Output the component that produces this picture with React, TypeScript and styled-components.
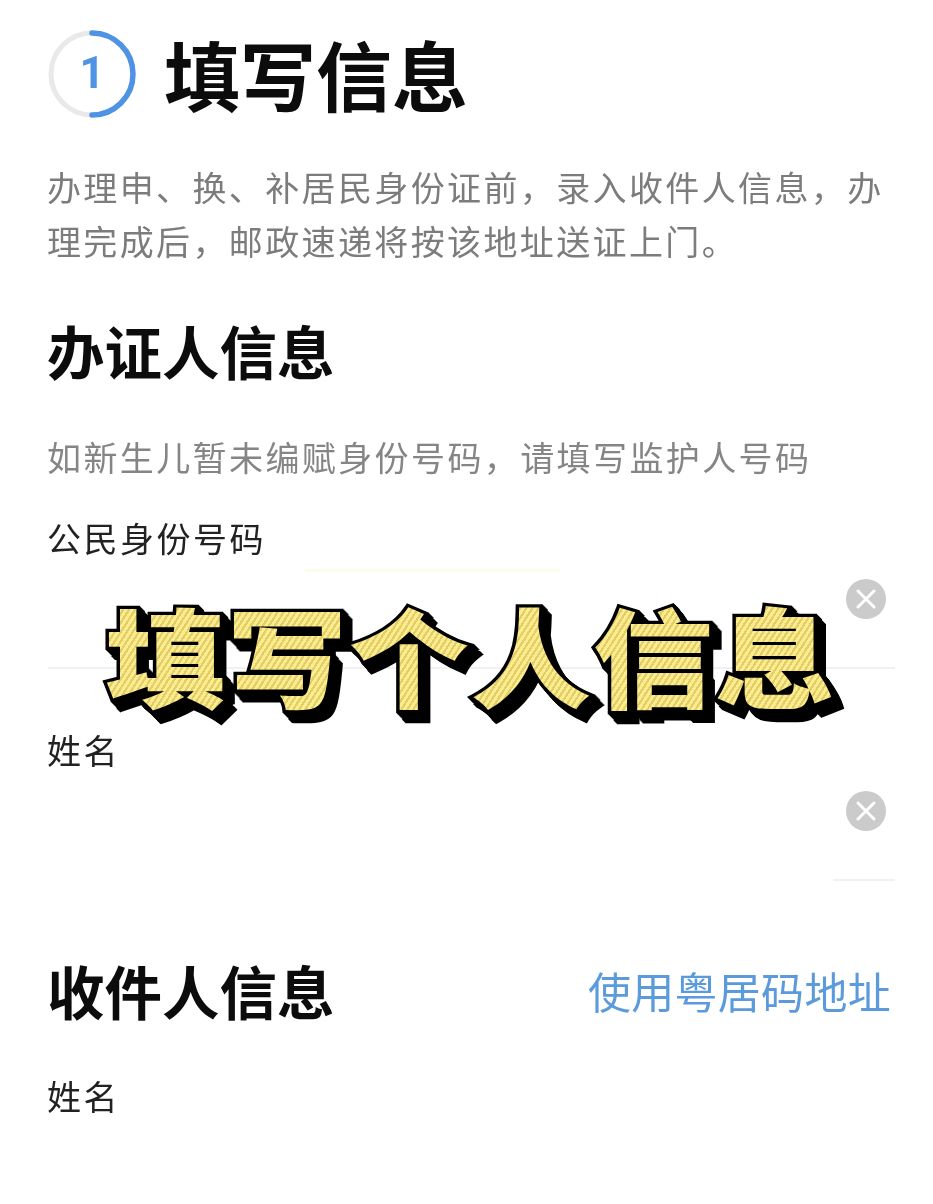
import React from "react";
import styled, { createGlobalStyle } from "styled-components";

const Global = createGlobalStyle`
  html, body { margin: 0; padding: 0; background: #fff; }
  body { font-family: "Noto Sans CJK SC", "Noto Sans", sans-serif; }
`;

const Page = styled.main`
  position: relative;
  width: 933px;
  height: 1204px;
  overflow: hidden;
  box-sizing: border-box;
  padding: 26px 38px 0 47px;
  background: #fff;
  filter: blur(0.5px);
`;

const StepHeader = styled.header`
  display: flex;
  align-items: center;
  gap: 27px;
  height: 94px;
`;

const StepRing = styled.svg`
  width: 90px;
  height: 90px;
  flex: none;
`;

const StepTitle = styled.h1`
  margin: 0;
  font-size: 76px;
  line-height: 94px;
  font-weight: 700;
  color: #0c0c0c;
`;

const Intro = styled.p`
  margin: 40px 0 0;
  font-size: 34px;
  line-height: 54px;
  letter-spacing: 2.37px;
  color: #7c7c7c;
  white-space: pre-line;
`;

const SectionHead = styled.div<{ $top: number }>`
  display: flex;
  align-items: center;
  justify-content: space-between;
  margin-top: ${(p) => p.$top}px;
  height: 70px;
`;

const SectionTitle = styled.h2`
  margin: 0;
  font-size: 57.5px;
  line-height: 70px;
  font-weight: 700;
  color: #0c0c0c;
`;

const LinkText = styled.a`
  font-size: 43px;
  line-height: 60px;
  letter-spacing: 0.3px;
  margin-right: 4px;
  color: #5b9bdc;
`;

const Hint = styled.p`
  margin: 47px 0 0;
  font-size: 34px;
  line-height: 50px;
  letter-spacing: 2.4px;
  color: #858585;
`;

const FieldLabel = styled.label<{ $top: number }>`
  display: block;
  margin-top: ${(p) => p.$top}px;
  font-size: 34px;
  line-height: 50px;
  letter-spacing: 2.5px;
  color: #222;
`;

const InputRow = styled.div`
  display: flex;
  justify-content: flex-end;
  align-items: center;
  height: 104px;
  margin-right: 9px;
  padding-bottom: 32px;
  box-sizing: border-box;
`;

const Rule = styled.div<{ $inset: number }>`
  height: 2px;
  margin-left: ${(p) => p.$inset}px;
  background: #f1f1f1;
`;

const ClearCircle = styled.svg`
  width: 40px;
  height: 40px;
  flex: none;
`;

const Glow = styled.div`
  position: absolute;
  left: 305px;
  top: 569px;
  width: 255px;
  height: 3px;
  background: #fdfbee;
`;

const Banner = styled.div`
  position: absolute;
  left: 105px;
  top: 586px;
  width: 760px;
  height: 150px;
  transform: scaleY(0.9);
  transform-origin: top left;
`;

const BannerLayer = styled.span`
  position: absolute;
  left: 0;
  top: 0;
  white-space: nowrap;
  font-family: "Noto Sans CJK SC", sans-serif;
  font-size: 120px;
  line-height: 150px;
  font-weight: 900;
  letter-spacing: 2px;
`;

const BannerShadow = styled(BannerLayer)<{ $x: number; $y: number }>`
  transform: translate(${(p) => p.$x}px, ${(p) => p.$y}px);
  color: #000;
  -webkit-text-stroke: 7px #000;
`;

const BannerFill = styled(BannerLayer)`
  color: transparent;
  background-image: repeating-linear-gradient(
    -60deg,
    #fcec90 0 3px,
    #e2cd66 3px 5.2px
  );
  -webkit-background-clip: text;
  background-clip: text;
`;

const Clear = () => (
  <ClearCircle viewBox="0 0 40 40">
    <circle cx="20" cy="20" r="20" fill="#cbcbcb" />
    <path d="M12 12 L28 28 M28 12 L12 28" stroke="#fff" strokeWidth="3" strokeLinecap="round" />
  </ClearCircle>
);

const extrusion = [9, 8, 7, 6, 5, 4, 3, 2, 1, 0];

export default function App() {
  const title = "填写个人信息";
  return (
    <Page>
      <Global />
      <StepHeader>
        <StepRing viewBox="0 0 90 90">
          <circle cx="45" cy="46" r="41" fill="none" stroke="#e9e9e9" strokeWidth="5" />
          <path d="M45 5 A41 41 0 0 1 45 87" fill="none" stroke="#4f94e4" strokeWidth="5.5" strokeLinecap="round" />
          <text x="45" y="60" textAnchor="middle" fontSize="44" fontWeight="700" fontFamily="Roboto, sans-serif" fill="#4f94e4">1</text>
        </StepRing>
        <StepTitle>填写信息</StepTitle>
      </StepHeader>
      <Intro>{"办理申、换、补居民身份证前，录入收件人信息，办\n理完成后，邮政速递将按该地址送证上门。"}</Intro>
      <SectionHead $top={47}>
        <SectionTitle>办证人信息</SectionTitle>
      </SectionHead>
      <Hint>如新生儿暂未编赋身份号码，请填写监护人号码</Hint>
      <FieldLabel $top={31}>公民身份号码</FieldLabel>
      <InputRow><Clear /></InputRow>
      <Rule $inset={1} />
      <FieldLabel $top={56}>姓名</FieldLabel>
      <InputRow><Clear /></InputRow>
      <Rule $inset={786} />
      <SectionHead $top={74}>
        <SectionTitle>收件人信息</SectionTitle>
        <LinkText>使用粤居码地址</LinkText>
      </SectionHead>
      <FieldLabel $top={46}>姓名</FieldLabel>
      <Glow />
      <Banner>
        {extrusion.map((d) => (
          <BannerShadow key={d} $x={d} $y={d * 1.15}>{title}</BannerShadow>
        ))}
        <BannerFill>{title}</BannerFill>
      </Banner>
    </Page>
  );
}
